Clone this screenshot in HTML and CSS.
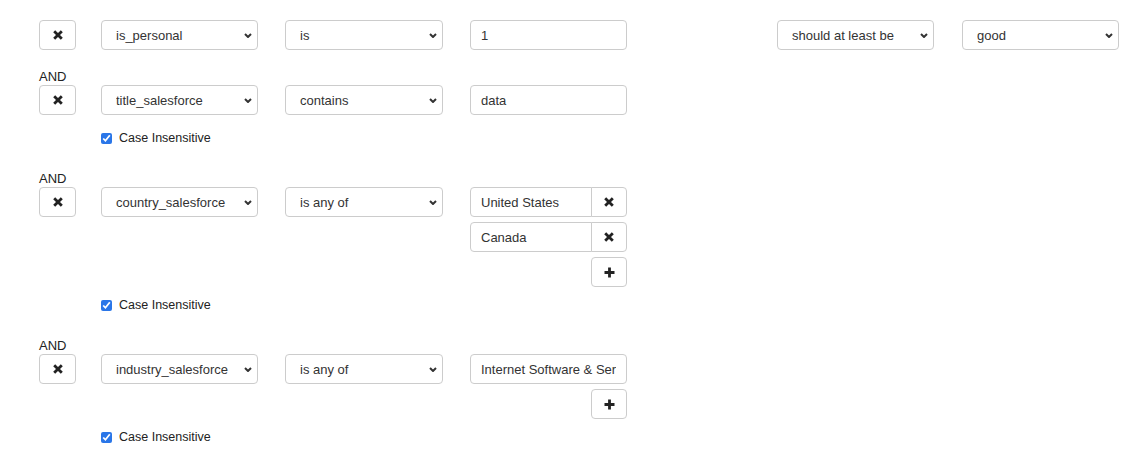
FILE: index.html
```html
<!DOCTYPE html>
<html lang="en">

<head>
  <meta charset="UTF-8">
  <meta name="viewport" content="width=device-width, initial-scale=1.0">
  <link rel="stylesheet" href="styles.css">
  <title>Rule builder</title>
</head>

<body>
  <div class="condition first">
    <div class="row">
      <button class="btn remove" title="Remove">
        <svg width="10" height="10" viewBox="0 0 10 10"><path d="M1.2 1.2 L8.8 8.8 M8.8 1.2 L1.2 8.8" /></svg>
      </button>
      <div class="select field">
        <select><option>is_personal</option></select>
        <svg class="chevron" width="8" height="5" viewBox="0 0 8 5"><path d="M1 1 L4 4 L7 1" /></svg>
      </div>
      <div class="select op">
        <select><option>is</option></select>
        <svg class="chevron" width="8" height="5" viewBox="0 0 8 5"><path d="M1 1 L4 4 L7 1" /></svg>
      </div>
      <div class="values">
        <input class="value-input" type="text" value="1">
      </div>
      <div class="select score-op">
        <select><option>should at least be</option></select>
        <svg class="chevron" width="8" height="5" viewBox="0 0 8 5"><path d="M1 1 L4 4 L7 1" /></svg>
      </div>
      <div class="select score">
        <select><option>good</option></select>
        <svg class="chevron" width="8" height="5" viewBox="0 0 8 5"><path d="M1 1 L4 4 L7 1" /></svg>
      </div>
    </div>
  </div>

  <div class="condition">
    <div class="conjunction">AND</div>
    <div class="row">
      <button class="btn remove" title="Remove">
        <svg width="10" height="10" viewBox="0 0 10 10"><path d="M1.2 1.2 L8.8 8.8 M8.8 1.2 L1.2 8.8" /></svg>
      </button>
      <div class="select field">
        <select><option>title_salesforce</option></select>
        <svg class="chevron" width="8" height="5" viewBox="0 0 8 5"><path d="M1 1 L4 4 L7 1" /></svg>
      </div>
      <div class="select op">
        <select><option>contains</option></select>
        <svg class="chevron" width="8" height="5" viewBox="0 0 8 5"><path d="M1 1 L4 4 L7 1" /></svg>
      </div>
      <div class="values">
        <input class="value-input" type="text" value="data">
      </div>
    </div>
    <label class="case"><input type="checkbox" checked> Case Insensitive</label>
  </div>

  <div class="condition">
    <div class="conjunction">AND</div>
    <div class="row">
      <button class="btn remove" title="Remove">
        <svg width="10" height="10" viewBox="0 0 10 10"><path d="M1.2 1.2 L8.8 8.8 M8.8 1.2 L1.2 8.8" /></svg>
      </button>
      <div class="select field">
        <select><option>country_salesforce</option></select>
        <svg class="chevron" width="8" height="5" viewBox="0 0 8 5"><path d="M1 1 L4 4 L7 1" /></svg>
      </div>
      <div class="select op">
        <select><option>is any of</option></select>
        <svg class="chevron" width="8" height="5" viewBox="0 0 8 5"><path d="M1 1 L4 4 L7 1" /></svg>
      </div>
      <div class="values">
        <div class="value-group">
          <input type="text" value="United States">
          <button class="btn" title="Remove value">
            <svg width="10" height="10" viewBox="0 0 10 10"><path d="M1.2 1.2 L8.8 8.8 M8.8 1.2 L1.2 8.8" /></svg>
          </button>
        </div>
        <div class="value-group">
          <input type="text" value="Canada">
          <button class="btn" title="Remove value">
            <svg width="10" height="10" viewBox="0 0 10 10"><path d="M1.2 1.2 L8.8 8.8 M8.8 1.2 L1.2 8.8" /></svg>
          </button>
        </div>
        <button class="btn add" title="Add value">
          <svg width="11" height="11" viewBox="0 0 11 11"><path d="M5.5 0.5 V10.5 M0.5 5.5 H10.5" /></svg>
        </button>
      </div>
    </div>
    <label class="case"><input type="checkbox" checked> Case Insensitive</label>
  </div>

  <div class="condition">
    <div class="conjunction">AND</div>
    <div class="row">
      <button class="btn remove" title="Remove">
        <svg width="10" height="10" viewBox="0 0 10 10"><path d="M1.2 1.2 L8.8 8.8 M8.8 1.2 L1.2 8.8" /></svg>
      </button>
      <div class="select field">
        <select><option>industry_salesforce</option></select>
        <svg class="chevron" width="8" height="5" viewBox="0 0 8 5"><path d="M1 1 L4 4 L7 1" /></svg>
      </div>
      <div class="select op">
        <select><option>is any of</option></select>
        <svg class="chevron" width="8" height="5" viewBox="0 0 8 5"><path d="M1 1 L4 4 L7 1" /></svg>
      </div>
      <div class="values">
        <input class="value-input" type="text" value="Internet Software &amp; Services">
        <button class="btn add" title="Add value">
          <svg width="11" height="11" viewBox="0 0 11 11"><path d="M5.5 0.5 V10.5 M0.5 5.5 H10.5" /></svg>
        </button>
      </div>
    </div>
    <label class="case"><input type="checkbox" checked> Case Insensitive</label>
  </div>
</body>

</html>
```

FILE: styles.css
```css
body {
  margin: 0;
  padding: 20px 0 0 39px;
  font-family: 'Liberation Sans', Arial, sans-serif;
  font-size: 13px;
  color: #333;
  background-color: #fff;
}

.condition {
  margin-bottom: 23px;
}

.condition.first {
  margin-bottom: 13px;
}

.conjunction {
  height: 17px;
  line-height: 17px;
  color: #222;
}

.row {
  display: flex;
  align-items: flex-start;
}

.btn {
  display: flex;
  align-items: center;
  justify-content: center;
  height: 30px;
  padding: 0;
  border: 1px solid #ccc;
  border-radius: 4px;
  background-color: #fff;
  cursor: pointer;
}

.btn svg path {
  fill: none;
  stroke: #222;
  stroke-width: 2.8;
}

.remove {
  width: 37px;
}

.select {
  position: relative;
  height: 30px;
}

.select select {
  width: 100%;
  height: 30px;
  padding: 0 20px 0 14px;
  border: 1px solid #ccc;
  border-radius: 4px;
  background-color: #fff;
  color: #333;
  font-family: inherit;
  font-size: 13px;
  -webkit-appearance: none;
  appearance: none;
}

.chevron {
  position: absolute;
  right: 6px;
  top: 13px;
  pointer-events: none;
}

.chevron path {
  fill: none;
  stroke: #333;
  stroke-width: 2;
}

.field {
  width: 157px;
  margin-left: 25px;
}

.op {
  width: 158px;
  margin-left: 27px;
}

.score-op {
  width: 157px;
  margin-left: 150px;
}

.score {
  width: 157px;
  margin-left: 28px;
}

.values {
  display: flex;
  flex-direction: column;
  align-items: flex-end;
  width: 157px;
  margin-left: 27px;
}

.values input {
  height: 30px;
  padding: 0 10px;
  border: 1px solid #ccc;
  border-radius: 4px;
  color: #333;
  font-family: inherit;
  font-size: 13px;
  box-sizing: border-box;
}

.value-input {
  width: 100%;
  margin-bottom: 5px;
}

.value-group {
  display: flex;
  width: 100%;
  margin-bottom: 5px;
}

.value-group input {
  flex: 1;
  min-width: 0;
  border-radius: 4px 0 0 4px;
}

.value-group .btn {
  width: 36px;
  margin-left: -1px;
  border-radius: 0 4px 4px 0;
}

.add {
  width: 36px;
}

.case {
  display: flex;
  align-items: center;
  height: 18px;
  margin: 9px 0 0 62px;
  font-size: 12.5px;
  color: #222;
}

.case input {
  width: 11px;
  height: 11px;
  margin: 0 7px 0 0;
  accent-color: #2a76e8;
}
```
